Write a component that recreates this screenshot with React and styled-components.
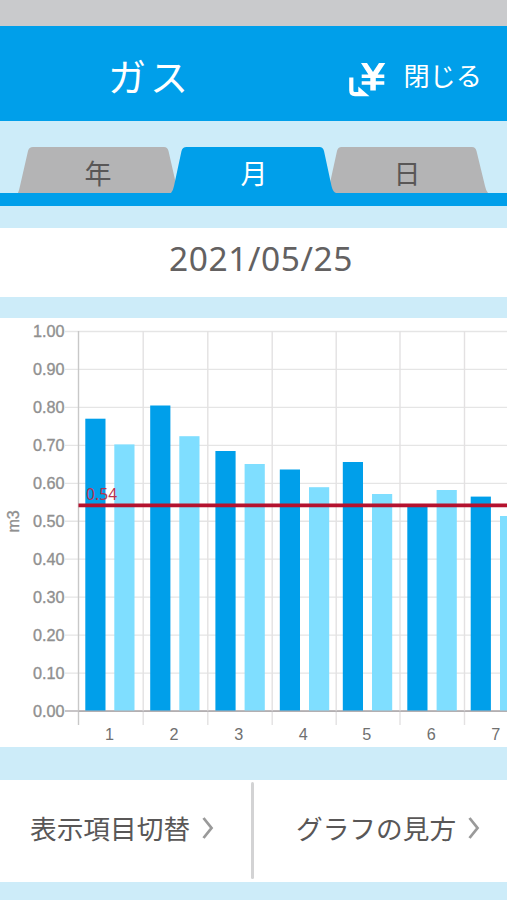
import React from 'react';
import styled, { createGlobalStyle } from 'styled-components';

const BLUE = '#009fea';
const PALE = '#cdecf9';
const INK = '#595757';

const GlobalStyle = createGlobalStyle`
  * { box-sizing: border-box; }
  body {
    margin: 0;
    overflow: hidden;
    background: ${PALE};
    font-family: 'Noto Sans CJK JP', 'Noto Sans', sans-serif;
  }
  button { font: inherit; border: 0; padding: 0; background: none; cursor: pointer; }
`;

const Screen = styled.main`
  width: 507px;
  height: 900px;
  overflow: hidden;
  display: flex;
  flex-direction: column;
  background: ${PALE};
`;

const StatusBar = styled.div`
  flex: 0 0 26.3px;
  background: #c9cacc;
`;

const Header = styled.header`
  flex: 0 0 94.4px;
  display: flex;
  align-items: center;
  padding: 0 25px 0 108px;
  background: ${BLUE};
  color: #fff;
`;

const Title = styled.h1`
  margin: 4px auto 0 0;
  font-size: 38px;
  line-height: 50px;
  font-weight: 400;
  letter-spacing: 4px;
`;

const YenIcon = styled.svg`
  width: 38px;
  height: 36px;
  margin: 15px 17px 0 0;
`;

const CloseButton = styled.button`
  margin-top: 4px;
  color: #fff;
  font-size: 26.2px;
  line-height: 40px;
`;

const TabBar = styled.nav`
  flex: 0 0 85px;
  display: grid;
  grid-template-columns: 154px 158px 157px;
  padding: 26.3px 0 0 18px;
  margin-bottom: 22.3px;
  border-bottom: 13.5px solid ${BLUE};
`;

const Tab = styled.button`
  position: relative;
  z-index: ${p => (p.$active ? 1 : 0)};
  height: 45.2px;
  padding: 6px ${p => p.$shiftLeft || 0}px 0 ${p => p.$shiftRight || 0}px;
  font-size: 27px;
  line-height: 40px;
  color: ${p => (p.$active ? '#fff' : INK)};
`;

const TabShape = styled.svg`
  position: absolute;
  inset: 0;
  z-index: -1;
  width: 100%;
  height: 100%;
  overflow: visible;
  fill: ${p => (p.$active ? BLUE : '#b4b4b5')};
`;

const TabLabel = styled.span`
  position: relative;
`;

const DateRow = styled.div`
  flex: 0 0 69px;
  margin-bottom: 20.6px;
  padding: 3px 0 0 15px;
  background: #fff;
  color: #636161;
  font-family: 'Noto Sans', sans-serif;
  font-size: 33.5px;
  line-height: 54px;
  letter-spacing: 0.6px;
  text-align: center;
`;

const ChartPanel = styled.section`
  flex: 0 0 429.4px;
  margin-bottom: 32.6px;
  background: #fff;
`;

const ChartSvg = styled.svg`
  display: block;
  width: 507px;
  height: 429px;
  font-family: 'Liberation Sans', Arial, sans-serif;
  font-size: 16.2px;
  fill: #909090;
`;

const Actions = styled.div`
  flex: 0 0 102.2px;
  display: grid;
  grid-template-columns: 251px 3px 253px;
  align-items: center;
  background: #fff;
`;

const Divider = styled.span`
  height: 97px;
  border-radius: 2px;
  background: #d3d3d4;
`;

const ActionButton = styled.button`
  display: flex;
  align-items: center;
  padding: 0 0 5px ${p => p.$inset}px;
  color: ${INK};
  font-size: 26.7px;
  line-height: 42px;
  white-space: nowrap;
`;

const Chevron = styled.svg`
  width: 12px;
  height: 24px;
  margin: 0 0 0 12px;
  fill: none;
  stroke: #9a9a9a;
  stroke-width: 2.8;
`;

const tabs = [
  { label: '年', right: 6, left: 0, d: 'M0 46Q1.2 43 2 39L10 4Q11 0 15 0H146Q149.500 0 150.500 4L158 37L154 46Z' },
  { label: '月', right: 6, left: 0, active: true, d: 'M-1 46Q1 44 2 39L9.500 4Q10.500 0 14.500 0H147.500Q151 0 152 4L159.500 39Q161 45.200 164 46Z' },
  { label: '日', right: 0, left: 3, d: 'M2 46L0 36L7 4Q8 0 11.500 0H142Q145.500 0 146.500 4L155 39Q156 44 158 46Z' },
];

const gridX = [78.5, 143.2, 207.8, 272.2, 336.2, 400, 464.5];
const months = [
  { x: 85.3, top: 100.7, x2: 114.3, top2: 126.4, label: 109.5 },
  { x: 150.2, top: 87.5, x2: 179.3, top2: 118.2, label: 174 },
  { x: 215.4, top: 133, x2: 244.6, top2: 146, label: 238.8 },
  { x: 279.8, top: 151.5, x2: 309, top2: 169.2, label: 303.3 },
  { x: 342.8, top: 144, x2: 372, top2: 176, label: 366.7 },
  { x: 407.3, top: 188.7, x2: 436.6, top2: 172, label: 431.3 },
  { x: 470.7, top: 178.6, x2: 500, top2: 198, label: 495.8 },
];
const levels = Array.from({ length: 11 }, (_, i) => ({ y: 13.5 + i * 37.95, text: (1 - i / 10).toFixed(2) }));

function UsageChart() {
  return (
    <ChartSvg viewBox="0 0 507 429">
      {levels.map(l => (
        <g key={l.text}>
          <path d={`M65 ${l.y}H507`} stroke={l.text === '0.00' ? '#b5b1b3' : '#e5e5e5'} strokeWidth="1.3" />
          <text x="64.4" y={l.y + 5.5} textAnchor="end" stroke="#909090" strokeWidth=".35">{l.text}</text>
        </g>
      ))}
      {gridX.map((x, i) => (
        <path key={x} d={`M${x} 13V407`} stroke={i === 0 ? '#c8c8c8' : '#e3e1e2'} strokeWidth="1.4" />
      ))}
      {months.map((m, i) => (
        <g key={m.x}>
          <rect x={m.x} y={m.top} width="20.2" height={392.7 - m.top} fill={BLUE} />
          <rect x={m.x2} y={m.top2} width="20.2" height={392.7 - m.top2} fill="#7fdeff" />
          <text x={m.label} y="422.3" textAnchor="middle" fill="#707070">{i + 1}</text>
        </g>
      ))}
      <path d="M78.500 393.200H507" stroke="#aaa5a8" strokeWidth="1" />
      <path d="M78.500 187.400H507" stroke="#b5122f" strokeWidth="3.8" />
      <text x="86" y="181.500" fill="#b8324e" fontFamily="Noto Sans, sans-serif" fontSize="15.500" textLength="31">0.54</text>
      <text transform="translate(19.200 214.500) rotate(-90)" fontSize="16" stroke="#909090" strokeWidth=".35">m3</text>
    </ChartSvg>
  );
}

function Action({ label, inset }) {
  return (
    <ActionButton $inset={inset}>
      {label}
      <Chevron viewBox="0 0 12 24"><path d="M1.500 2L9.500 12L1.500 22" /></Chevron>
    </ActionButton>
  );
}

export default function App() {
  return (
    <Screen>
      <GlobalStyle />
      <StatusBar />
      <Header>
        <Title>ガス</Title>
        <YenIcon viewBox="0 0 38 36">
          <path d="M13 0H19L25 9L31 0H37.300L29.700 11.500H36.300V15H27.800V18.200H36.300V21.800H27.800V27.500H22.300V21.800H13.700V18.200H22.300V15H13.700V11.500H20.400Z" fill="#fff" />
          <path d="M1.200 14.500H5.400V27.500Q5.400 29 7 29H10.300V23.500L21.500 33.200H7Q1.200 33.200 1.200 27.500Z" fill="#fff" />
        </YenIcon>
        <CloseButton>閉じる</CloseButton>
      </Header>
      <TabBar>
        {tabs.map(t => (
          <Tab key={t.label} $active={t.active} $shiftRight={t.right} $shiftLeft={t.left}>
            <TabShape $active={t.active}><path d={t.d} /></TabShape>
            <TabLabel>{t.label}</TabLabel>
          </Tab>
        ))}
      </TabBar>
      <DateRow>2021/05/25</DateRow>
      <ChartPanel><UsageChart /></ChartPanel>
      <Actions>
        <Action label="表示項目切替" inset={30} />
        <Divider />
        <Action label="グラフの見方" inset={42} />
      </Actions>
    </Screen>
  );
}
